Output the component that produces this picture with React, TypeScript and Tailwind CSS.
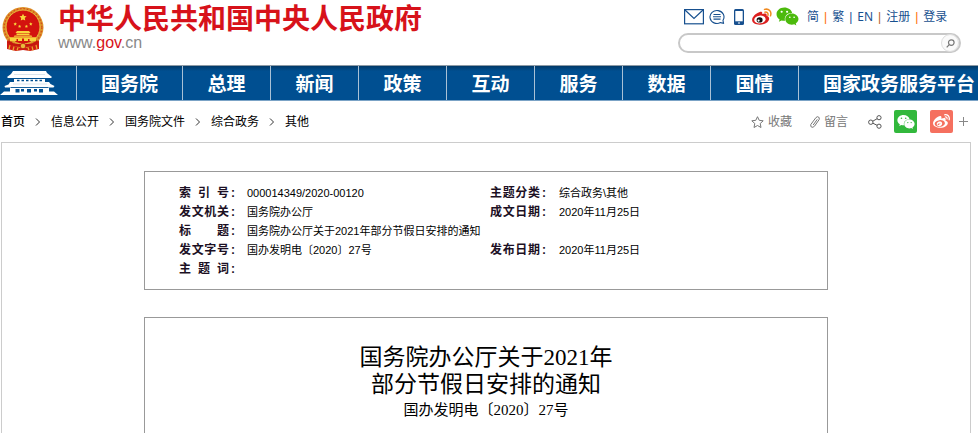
import React from "react";
import { FaWeixin, FaWeibo } from "react-icons/fa";

const sans = "font-['Liberation_Sans','Noto_Sans_CJK_SC',sans-serif]";
const cjk = "font-['Noto_Sans_CJK_SC',sans-serif]";

function Emblem() {
  const star = "0,-1 .29,-.4 .95,-.31 .47,.15 .59,.81 0,.5 -.59,.81 -.47,.15 -.95,-.31 -.29,-.4";
  return (
    <svg viewBox="0 0 42 45" className="h-[45px] w-[42px] shrink-0" aria-label="国徽" role="img">
      <path d="M5 31 L5 42 L14 44 L21 43 L28 44 L37 42 L37 31Z" fill="#cf1b12" />
      <circle cx="21" cy="20.5" r="20.5" fill="#dd9228" />
      <circle cx="21" cy="20.5" r="18.8" fill="none" stroke="#d4501f" strokeWidth="1.4" strokeDasharray="1.6 1.8" />
      <circle cx="21" cy="20" r="17" fill="#d3120f" stroke="#e9b93d" strokeWidth="1" />
      <g fill="#f8d53c">
        <polygon points={star} transform="translate(21 10.5) scale(3.8)" />
        <polygon points={star} transform="translate(13.2 17) scale(1.8)" />
        <polygon points={star} transform="translate(28.8 17) scale(1.8)" />
        <polygon points={star} transform="translate(17.6 19.4) scale(1.7)" />
        <polygon points={star} transform="translate(24.4 19.4) scale(1.7)" />
        <path d="M15 24h12l1.5 2h-15zM14.500 26.500h13v1.600h-13zM12.500 28.400h17l.8 1.300H11.700zM8 30.200h26v3.800H8z" />
      </g>
      <path d="M20 31.600h2v2.400h-2zM14.500 32h1.500v2h-1.500zM26 32h1.500v2h-1.500z" fill="#d3120f" />
      <path d="M6 34.500C12 39 16 38.500 21 38.500S30 39 36 34.500" fill="none" stroke="#c4150f" strokeWidth="2.800" />
      <circle cx="21" cy="39" r="2.800" fill="#e9b93d" stroke="#b80f0c" strokeWidth=".8" />
      <path d="M8 38l-1 4M12 39.500l-1 4M30 39.500l1 4M34 38l1 4M16 40.500l-1 3M26 40.500l1 3" stroke="#e9a92f" strokeWidth="1.200" />
    </svg>
  );
}

function Gate() {
  return (
    <svg viewBox="0 0 58 24" className="h-6 w-[58px]" aria-hidden="true">
      <g fill="#fff">
        <path d="M13 0h33l1 2 5 4-1 1H8L7 6l4-3z" />
        <path d="M14 8h31v3H14zM10 11h39l1.500 2 4 2-1 1.500H5L4.500 15l4-1.500z" />
        <path d="M10 17h39v3.500h5l4 3.500H0l4-3.500h6z" />
      </g>
      <path d="M14 3.500h31M13 13h34" stroke="#cfdde9" strokeWidth=".8" />
      <path d="M17 9.500h25" stroke="#004f91" strokeWidth="1.500" strokeDasharray="2.500 2" />
      <path d="M15.500 18h4v3.500h-4zM21 18h3v2.500h-3zM27 18h4v3.500h-4zM34 18h3v2.500h-3zM39 18h4v3.500h-4z" fill="#004f91" />
      <path d="M11 16.500h37" stroke="#004f91" strokeWidth=".8" />
    </svg>
  );
}

function Mail() {
  return (
    <svg viewBox="0 0 20 16" className="h-4 w-5" fill="none" stroke="#17508f" strokeWidth="1.200">
      <rect x=".6" y=".6" width="18.800" height="14.200" />
      <path d="M1 1l9 8.500L19 1" />
    </svg>
  );
}

function Message() {
  return (
    <svg viewBox="0 0 16 16" className="size-4" fill="none" stroke="#17508f" strokeWidth="1.100">
      <path d="M11.500 13.600A7 6.500 0 1 1 14 11.300l.5 3z" />
      <path d="M4.500 5.500h7M4 7.800h8M4.500 10.100h7" />
    </svg>
  );
}

function Phone() {
  return (
    <svg viewBox="0 0 10 16" className="h-4 w-[10px]">
      <rect width="10" height="16" rx="1.500" fill="#17508f" />
      <path d="M1.300 2h7.400v10.300H1.300z" fill="#fff" />
      <path d="M4 14h2" stroke="#fff" strokeWidth="1.200" />
    </svg>
  );
}

function WeiboColor() {
  return (
    <svg viewBox="0 0 20 17" className="h-[17px] w-5">
      <path d="M7.300 4.300C9.500 3.200 10.700 4.200 10.200 6.100c2.300-.9 5-.8 4.400 1.700 2.400.7 3.300 2.600 1.900 4.900-1.600 2.600-5.100 4-8.700 4C3.500 16.700.2 14.800.1 12 0 9 3.800 5.400 7.300 4.300z" fill="#dc1f1f" />
      <ellipse cx="7.900" cy="11.500" rx="5.700" ry="3.900" fill="#fff" transform="rotate(-7 7.900 11.500)" />
      <ellipse cx="7.600" cy="11.900" rx="3" ry="2.700" fill="#111" />
      <circle cx="6.600" cy="12.600" r="1.100" fill="#fff" />
      <path d="M12.500 1.400C16.800.2 20 3.600 18.500 7.800M12.900 4.200c2.200-.5 3.600 1 3 3" fill="none" stroke="#f08a20" strokeWidth="1.500" strokeLinecap="round" />
    </svg>
  );
}

function Star() {
  return (
    <svg viewBox="0 0 13 12" className="h-3 w-[13px]" fill="none" stroke="#777" strokeLinejoin="round">
      <path d="M6.500.7l1.700 3.600 4 .5-3 2.700.8 4-3.500-2-3.500 2 .8-4-3-2.700 4-.5z" />
    </svg>
  );
}

function Pencil() {
  return (
    <svg viewBox="0 0 10 12" className="h-3 w-[10px]" fill="none" stroke="#777" strokeLinejoin="round">
      <path d="M6 1.500Q7.500-.2 9.200 1.600V3.500L4.500 10.200Q1.500 12.500.8 10V8.500zM7.300 3.300L3.200 9" />
    </svg>
  );
}

function Share() {
  return (
    <svg viewBox="0 0 14 14" className="size-[14px]" fill="none" stroke="#555">
      <circle cx="2.800" cy="7.200" r="2.200" />
      <circle cx="11" cy="2.700" r="2.100" />
      <circle cx="11" cy="11.200" r="2.100" />
      <path d="M4.800 6.200l4.300-2.500M4.800 8.200l4.300 2.100" />
    </svg>
  );
}

const navItems = ["国务院", "总理", "新闻", "政策", "互动", "服务", "数据", "国情"];
const crumbs = ["信息公开", "国务院文件", "综合政务", "其他"];
const quick = [
  { text: "简", bar: "text-orange-500" },
  { text: "繁", bar: "text-[#17508f]" },
  { text: "EN", bar: "text-[#b5622c]" },
  { text: "注册", bar: "text-orange-500" },
  { text: "登录", bar: "" },
];
const rows = [
  ["索 引 号", "000014349/2020-00120", "主题分类", "综合政务\\其他"],
  ["发文机关", "国务院办公厅", "成文日期", "2020年11月25日"],
  ["标 题", "国务院办公厅关于2021年部分节假日安排的通知", "", ""],
  ["发文字号", "国办发明电〔2020〕27号", "发布日期", "2020年11月25日"],
  ["主 题 词", "", "", ""],
];

function Label({ text }: { text: string }) {
  if (!text) return <td />;
  return (
    <th scope="row" className="p-0 text-left text-[12px] font-bold text-[#1c1024]">
      <span className="flex gap-[2px]">
        <span className="w-[50px] [text-align-last:justify]">{text}</span>
        <span>:</span>
      </span>
    </th>
  );
}

export default function App() {
  return (
    <div className={`flex min-h-screen flex-col bg-white text-[12px] text-black ${sans}`}>
      <header className="flex h-[65px] items-start justify-between pr-[17px] pl-[2px]">
        <div className="flex pt-[7px]">
          <Emblem />
          <div className="pl-[14px]">
            <h1 className="text-[28px] leading-[26px] font-bold whitespace-nowrap text-[#d7121a]">
              中华人民共和国中央人民政府
            </h1>
            <a href="#" className="block text-[16px] leading-[20px] text-[#888]">
              www.<span className="text-[#d7121a]">gov</span>.cn
            </a>
          </div>
        </div>
        <div className="w-[283px] pt-[6px]">
          <div className="flex h-[21px] items-center pl-[6px]">
            <a href="#" aria-label="邮箱"><Mail /></a>
            <a href="#" aria-label="消息" className="ml-[5px]"><Message /></a>
            <a href="#" aria-label="手机版" className="ml-[9px]"><Phone /></a>
            <a href="#" aria-label="微博" className="ml-2"><WeiboColor /></a>
            <a href="#" aria-label="微信" className="ml-1"><FaWeixin className="size-[23px] text-[#4cba0c]" /></a>
            <nav className="ml-2 flex items-center gap-[5px] pt-px leading-[20px] text-[#17508f]">
              {quick.map((q) => (
                <React.Fragment key={q.text}>
                  <a href="#" className={`whitespace-nowrap ${q.text === "EN" ? "font-['Noto_Sans',sans-serif]" : ""}`}>
                    {q.text}
                  </a>
                  {q.bar && <span className={q.bar}>|</span>}
                </React.Fragment>
              ))}
            </nav>
          </div>
          <form className="mt-[6px] flex h-[20px] items-center rounded-full border-2 border-[#c8c8c8]" onSubmit={(e) => e.preventDefault()}>
            <input type="text" aria-label="搜索" className="h-4 min-w-0 flex-1 bg-transparent px-3 outline-none" />
            <button type="submit" aria-label="提交搜索" className="flex size-[18px] items-center justify-center rounded-full border border-[#ddd] bg-[#fafafa]">
              <svg viewBox="0 0 9 9" className="size-[9px]" fill="none" stroke="#777" strokeWidth="1.200">
                <circle cx="5.300" cy="3.600" r="2.800" />
                <path d="M3.200 5.700L.7 8.300" />
              </svg>
            </button>
          </form>
        </div>
      </header>

      <nav className={`grid h-9 grid-cols-[77fr_106fr_repeat(7,88fr)_179fr] border-t border-b border-t-[#8d9aa5] border-b-[#7ba3c6] bg-linear-to-b from-[#023a68] via-[#004f91] via-15% to-[#004f91] text-[19px] font-bold whitespace-nowrap text-white ${cjk}`}>
        <a href="#" aria-label="首页" className="flex items-center border-r border-[#a9c1d6]">
          <Gate />
        </a>
        {navItems.map((n) => (
          <a key={n} href="#" className="flex items-center justify-center border-r border-[#a9c1d6]">
            {n}
          </a>
        ))}
        <a href="#" className="flex items-center pl-6">国家政务服务平台</a>
      </nav>

      <div className="flex h-[41px] items-center justify-between pr-[10px] pl-px">
        <nav aria-label="面包屑" className="flex items-center">
          <a href="#" className="font-medium">首页</a>
          {crumbs.map((c) => (
            <React.Fragment key={c}>
              <svg viewBox="0 0 6 8" className="mx-[10px] h-2 w-[6px]" fill="none" stroke="#333">
                <path d="M1 .5l3.500 3.500L1 7.500" />
              </svg>
              <a href="#">{c}</a>
            </React.Fragment>
          ))}
        </nav>
        <div className="flex items-center text-[#777]">
          <button type="button" className="flex items-center gap-1"><Star />收藏</button>
          <button type="button" className="ml-[18px] flex items-center gap-1"><Pencil />留言</button>
          <button type="button" aria-label="分享" className="ml-5"><Share /></button>
          <button type="button" aria-label="分享到微信" className="ml-3 flex size-[23px] items-center justify-center rounded-[2px] bg-[#32b83c] text-white">
            <FaWeixin className="size-[18px]" />
          </button>
          <button type="button" aria-label="分享到微博" className="ml-[13px] flex size-[23px] items-center justify-center rounded-[2px] bg-[#f5705f] text-white">
            <FaWeibo className="size-[17px]" />
          </button>
          <button type="button" aria-label="更多" className="ml-[6px]">
            <svg viewBox="0 0 9 9" className="size-[9px]" stroke="#888"><path d="M4.500 0v9M0 4.500h9" /></svg>
          </button>
        </div>
      </div>

      <main className="mr-[7px] ml-px flex flex-1 flex-col border border-b-0 border-[#ccc] px-[142px] pt-7">
        <section className="border border-[#999] pt-3 pr-4 pb-[10px] pl-[34px]">
          <table className="w-full table-fixed border-collapse">
            <colgroup>
              <col className="w-[68px]" />
              <col className="w-[243px]" />
              <col className="w-[69px]" />
              <col />
            </colgroup>
            <tbody>
              {rows.map((r) => (
                <tr key={r[0]} className="h-[19px] leading-[19px]">
                  <Label text={r[0]} />
                  <td className="p-0 text-[11px] whitespace-nowrap">{r[1]}</td>
                  <Label text={r[2]} />
                  <td className="p-0 text-[11px] whitespace-nowrap">{r[3]}</td>
                </tr>
              ))}
            </tbody>
          </table>
        </section>
        <article className="mt-[27px] flex-1 border border-b-0 border-[#999] pt-[26px] text-center font-['Liberation_Serif','Noto_Sans_CJK_SC',serif]">
          <h2 className="text-[23px] leading-[27px]">
            国务院办公厅关于2021年
            <br />
            部分节假日安排的通知
          </h2>
          <p className="text-[15px] leading-[25px]">国办发明电〔2020〕27号</p>
        </article>
      </main>
    </div>
  );
}
